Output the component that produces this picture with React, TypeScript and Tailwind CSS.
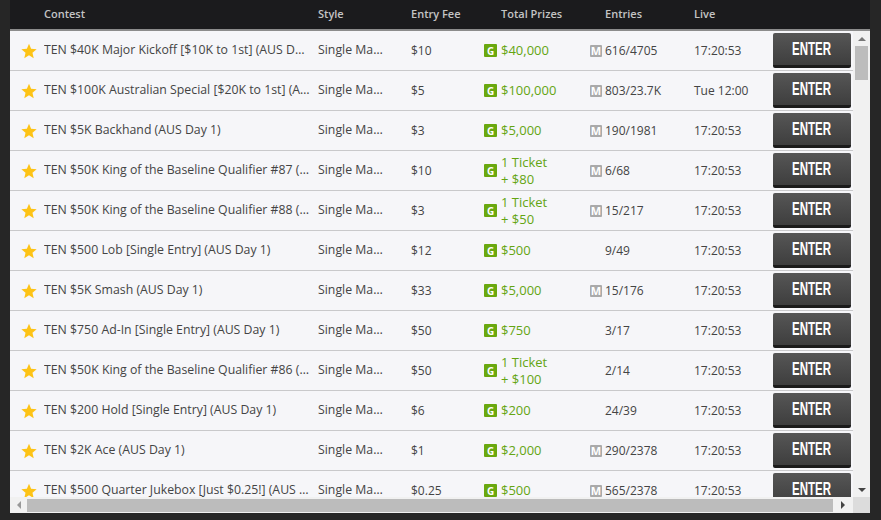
const rows = [
  { name: 'TEN $40K Major Kickoff [$10K to 1st] (AUS Day 1)', fee: '$10', prize: ['$40,000'], multi: true, entries: '616/4705', live: '17:20:53' },
  { name: 'TEN $100K Australian Special [$20K to 1st] (AUS Day 1)', fee: '$5', prize: ['$100,000'], multi: true, entries: '803/23.7K', live: 'Tue 12:00' },
  { name: 'TEN $5K Backhand (AUS Day 1)', fee: '$3', prize: ['$5,000'], multi: true, entries: '190/1981', live: '17:20:53' },
  { name: 'TEN $50K King of the Baseline Qualifier #87 (AUS Day 1)', fee: '$10', prize: ['1 Ticket', '+ $80'], multi: true, entries: '6/68', live: '17:20:53' },
  { name: 'TEN $50K King of the Baseline Qualifier #88 (AUS Day 1)', fee: '$3', prize: ['1 Ticket', '+ $50'], multi: true, entries: '15/217', live: '17:20:53' },
  { name: 'TEN $500 Lob [Single Entry] (AUS Day 1)', fee: '$12', prize: ['$500'], multi: false, entries: '9/49', live: '17:20:53' },
  { name: 'TEN $5K Smash (AUS Day 1)', fee: '$33', prize: ['$5,000'], multi: true, entries: '15/176', live: '17:20:53' },
  { name: 'TEN $750 Ad-In [Single Entry] (AUS Day 1)', fee: '$50', prize: ['$750'], multi: false, entries: '3/17', live: '17:20:53' },
  { name: 'TEN $50K King of the Baseline Qualifier #86 (AUS Day 1)', fee: '$50', prize: ['1 Ticket', '+ $100'], multi: false, entries: '2/14', live: '17:20:53' },
  { name: 'TEN $200 Hold [Single Entry] (AUS Day 1)', fee: '$6', prize: ['$200'], multi: false, entries: '24/39', live: '17:20:53' },
  { name: 'TEN $2K Ace (AUS Day 1)', fee: '$1', prize: ['$2,000'], multi: true, entries: '290/2378', live: '17:20:53' },
  { name: 'TEN $500 Quarter Jukebox [Just $0.25!] (AUS Day 1)', fee: '$0.25', prize: ['$500'], multi: true, entries: '565/2378', live: '17:20:53' },
];

function Star() {
  return (
    <svg width="16" height="16" viewBox="0 0 24 24" className="block">
      <path d="M12 1l3.2 7.600 8.300.7-6.300 5.400 1.900 8.100L12 18.500l-7.100 4.300 1.900-8.100L.5 9.300l8.300-.7z" fill="#fdc316" />
    </svg>
  );
}

function Row({ row }: { row: (typeof rows)[number] }) {
  return (
    <div className="flex items-center h-10 shrink-0 border-b border-[#c9c9cb] text-[12px] text-[#444444]">
      <div className="w-[34px] pl-[11px]"><Star /></div>
      <div className="w-[274px] pr-[8px] truncate text-[12.3px]">{row.name}</div>
      <div className="w-[93px] pr-[26px] truncate text-[12.3px]">Single Match</div>
      <div className="w-[73px]">{row.fee}</div>
      <div className="w-[106px] flex items-center">
        <span className="w-[13px] h-[13px] bg-[#6aa80f] text-white text-[10px] font-bold flex items-center justify-center rounded-[1px] shrink-0 leading-none">G</span>
        <div className="ml-[4px] text-[13px] leading-[17px] font-medium text-[#64a512]">
          {row.prize.map((p) => <div key={p}>{p}</div>)}
        </div>
      </div>
      <div className="w-[104px] flex items-center">
        {row.multi
          ? <span className="w-[12px] h-[12px] bg-[#aaaaaa] text-white text-[11px] font-bold flex items-center justify-center rounded-[1px] shrink-0 leading-none">M</span>
          : <span className="w-[12px] shrink-0" />}
        <span className="ml-[3px]">{row.entries}</span>
      </div>
      <div className="w-[79px]">{row.live}</div>
      <button className="w-[78px] h-[35px] shrink-0 rounded-[2px] border-b-[3px] border-[#1b1b1b] bg-gradient-to-b from-[#565656] to-[#3e3e3e] text-white text-[18px] font-bold leading-none font-['Liberation_Sans',sans-serif]">
        <span className="inline-block scale-x-[0.64]">ENTER</span>
      </button>
    </div>
  );
}

export default function App() {
  return (
    <div className="w-[881px] h-[520px] overflow-hidden bg-[#262626] pl-[10px] pr-[11px] font-['Open_Sans',sans-serif]">
      <div className="h-[513px] flex flex-col bg-[#f6f6f9]">
        <div className="h-[31px] shrink-0 flex items-center bg-[#1b1b1d] border-b-[2px] border-[#8c8c8c] text-[11px] font-semibold text-[#c4c4c4]">
          <div className="w-[34px]" />
          <div className="w-[274px]">Contest</div>
          <div className="w-[93px]">Style</div>
          <div className="w-[90px]">Entry Fee</div>
          <div className="w-[104px]">Total Prizes</div>
          <div className="w-[89px]">Entries</div>
          <div>Live</div>
        </div>
        <div className="flex-1 flex min-h-0">
          <div className="w-[843px] flex flex-col overflow-hidden">
            {rows.map((r) => <Row key={r.name} row={r} />)}
          </div>
          <div className="w-[17px] flex flex-col items-center bg-[#f1f1f1]">
            <div className="h-[15px] flex items-center">
              <div className="w-0 h-0 border-x-[4px] border-x-transparent border-b-[4px] border-b-[#777777]" />
            </div>
            <div className="w-[13px] h-[34px] bg-[#bcbcbc]" />
            <div className="flex-1" />
            <div className="h-[15px] flex items-center">
              <div className="w-0 h-0 border-x-[4px] border-x-transparent border-t-[4px] border-t-[#444444]" />
            </div>
          </div>
        </div>
        <div className="h-[16px] shrink-0 flex items-center bg-[#f1f1f1]">
          <div className="w-[17px] flex justify-center">
            <div className="w-0 h-0 border-y-[4px] border-y-transparent border-r-[4px] border-r-[#999999]" />
          </div>
          <div className="w-[806px] h-[13px] bg-[#bcbcbc]" />
          <div className="w-[20px] flex justify-center">
            <div className="w-0 h-0 border-y-[4px] border-y-transparent border-l-[4px] border-l-[#444444]" />
          </div>
          <div className="flex-1 h-full bg-[#dcdcdc]" />
        </div>
      </div>
    </div>
  );
}
